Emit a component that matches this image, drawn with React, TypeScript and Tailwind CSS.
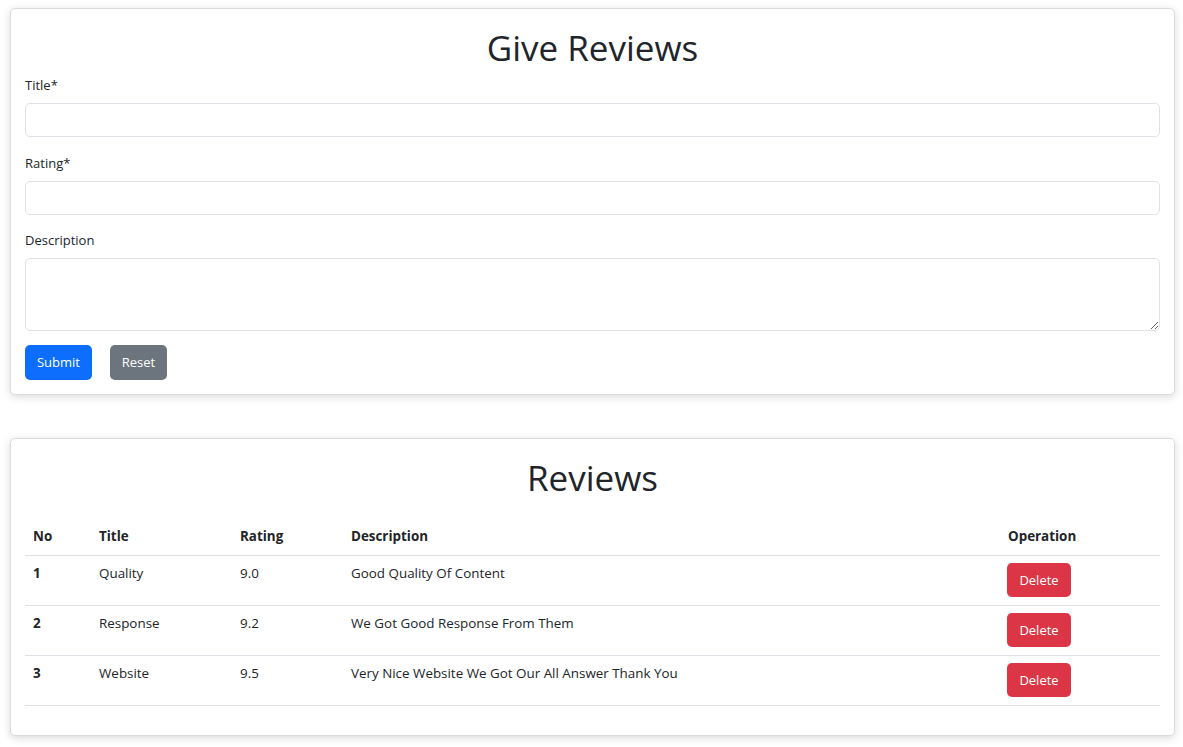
import React from 'react';

const reviews = [
  { no: 1, title: 'Quality', rating: '9.0', description: 'Good Quality Of Content' },
  { no: 2, title: 'Response', rating: '9.2', description: 'We Got Good Response From Them' },
  { no: 3, title: 'Website', rating: '9.5', description: 'Very Nice Website We Got Our All Answer Thank You' }
];

const font = { fontFamily: '"Open Sans", "Noto Sans", sans-serif' };

function Field({ label, textarea }: { label: string; textarea?: boolean }) {
  return (
    <div className={textarea ? 'mb-[14px]' : 'mb-[15.5px]'}>
      <label className="mb-[7px] block h-[21px] text-[13px] leading-[21px]">{label}</label>
      {textarea ? (
        <textarea className="block h-[73px] w-full rounded-[5px] border border-[#dee2e6] px-3 py-1.5 outline-none" />
      ) : (
        <input className="block h-[34px] w-full rounded-[5px] border border-[#dee2e6] px-3 outline-none" />
      )}
    </div>
  );
}

export default function App() {
  return (
    <div className="min-h-screen bg-white pt-[8px] pr-[8px] pl-[10px] text-[#212529]" style={font}>
      <div className="rounded-[5px] border border-[#dcdcdc] bg-white p-[14px] shadow-[0_2px_8px_rgba(0,0,0,0.15)]">
        <h1 className="flex h-[52px] items-center justify-center pb-[4px] text-[35px] font-normal leading-none">
          Give Reviews
        </h1>
        <Field label="Title*" />
        <Field label="Rating*" />
        <Field label="Description" textarea />
        <div className="flex gap-[18px]">
          <button className="h-[35px] w-[67px] rounded-[5px] bg-[#0d6efd] text-[13px] text-white">Submit</button>
          <button className="h-[35px] w-[57px] rounded-[5px] bg-[#6c757d] text-[13px] text-white">Reset</button>
        </div>
      </div>

      <div className="mt-[43px] rounded-[5px] border border-[#dcdcdc] bg-white px-[14px] pt-[14px] pb-[29px] shadow-[0_2px_8px_rgba(0,0,0,0.15)]">
        <h2 className="mb-[15px] flex h-[50px] items-center justify-center pb-[2px] text-[35px] font-normal leading-none">
          Reviews
        </h2>
        <table className="w-full table-fixed border-collapse text-left text-[13.4px] leading-[21px]">
          <colgroup>
            <col className="w-[66px]" />
            <col className="w-[141px]" />
            <col className="w-[111px]" />
            <col className="w-[657px]" />
            <col />
          </colgroup>
          <thead>
            <tr className="border-b border-[#dee2e6]">
              <th className="px-2 py-2 font-bold">No</th>
              <th className="px-2 py-2 font-bold">Title</th>
              <th className="px-2 py-2 font-bold">Rating</th>
              <th className="px-2 py-2 font-bold">Description</th>
              <th className="px-2 py-2 font-bold">Operation</th>
            </tr>
          </thead>
          <tbody>
            {reviews.map((r) => (
              <tr key={r.no} className="border-b border-[#dee2e6] align-top">
                <td className="px-2 pt-[7px] pb-[8px] font-bold">{r.no}</td>
                <td className="px-2 pt-[7px] pb-[8px]">{r.title}</td>
                <td className="px-2 pt-[7px] pb-[8px]">{r.rating}</td>
                <td className="px-2 pt-[7px] pb-[8px]">{r.description}</td>
                <td className="px-2 pt-[7px] pb-[8px]">
                  <button className="-ml-px block h-[34px] w-[64px] rounded-[5px] bg-[#dc3545] text-[13px] text-white">
                    Delete
                  </button>
                </td>
              </tr>
            ))}
          </tbody>
        </table>
      </div>
    </div>
  );
}
